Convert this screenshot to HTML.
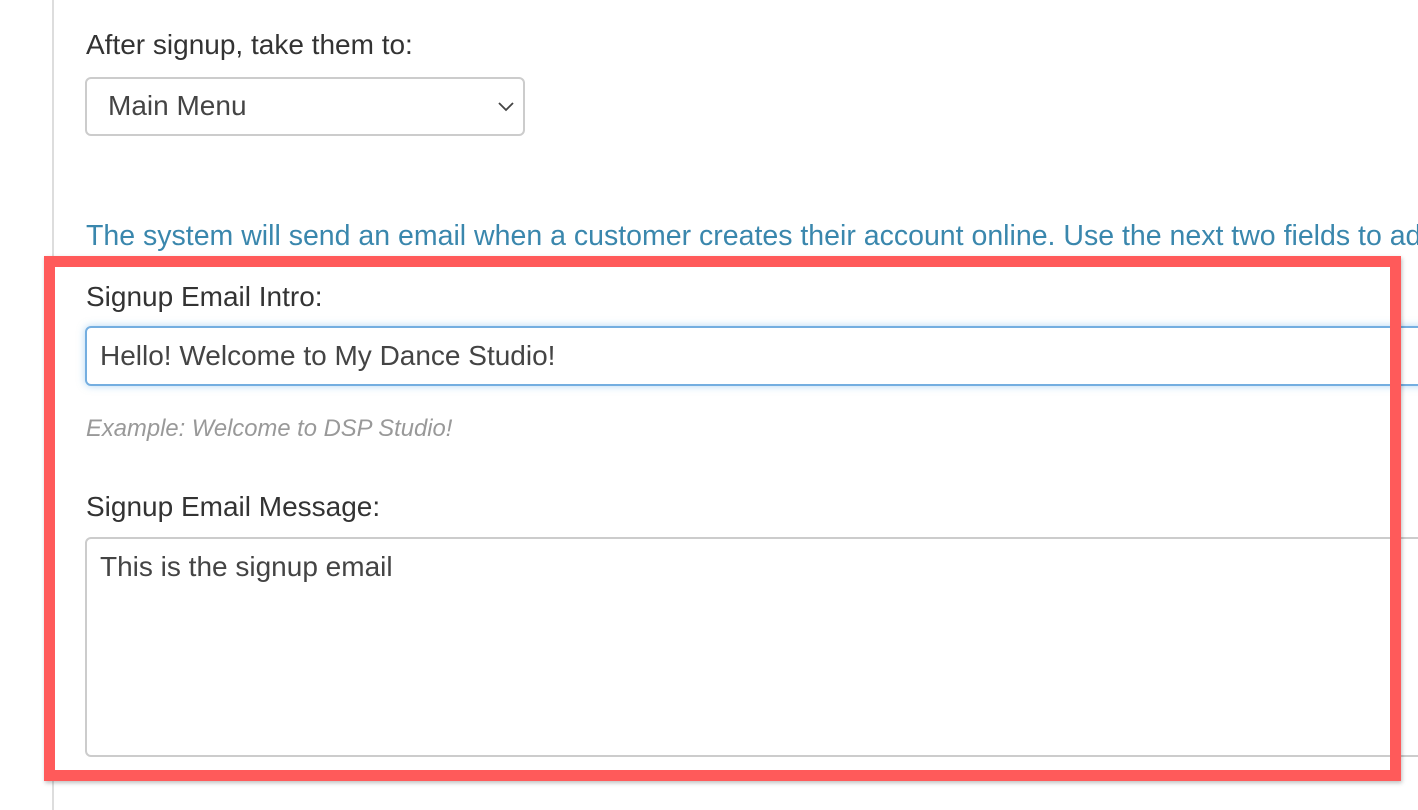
<!DOCTYPE html>
<html><head><style>
body{margin:0;width:1418px;height:810px;overflow:hidden;background:#fff;font-family:"Liberation Sans",Arial,sans-serif;position:relative}
.vl{position:absolute;left:52px;top:0;width:2px;height:810px;background:#ddd}
.t{position:absolute;white-space:nowrap}
.lbl{font-size:28px;color:#333}
.box{position:absolute;background:#fff;border:2px solid #ccc;border-radius:6px;box-sizing:border-box}
</style></head><body>
<div class="vl"></div>
<div class="t lbl" style="left:86px;top:29px">After signup, take them to:</div>
<div class="box" style="left:85px;top:77px;width:440px;height:59px"></div>
<div class="t" style="left:108px;top:90px;font-size:28px;color:#444">Main Menu</div>
<svg style="position:absolute;left:497px;top:99px" width="18" height="14"><path d="M2 4 L9 11 L16 4" stroke="#444" stroke-width="1.8" fill="none"/></svg>
<div class="t" style="left:86px;top:220px;font-size:28.5px;color:#3a87ad">The system will send an email when a customer creates their account online. Use the next two fields to add</div>
<div class="t lbl" style="left:86px;top:281px">Signup Email Intro:</div>
<div class="box" style="left:85px;top:326px;width:1400px;height:60px;border-color:#74aee0;box-shadow:0 0 8px rgba(102,175,233,.5)"></div>
<div class="t" style="left:100px;top:340px;font-size:28px;color:#444">Hello! Welcome to My Dance Studio!</div>
<div class="t" style="left:86px;top:415px;font-size:23.8px;color:#999;font-style:italic">Example: Welcome to DSP Studio!</div>
<div class="t lbl" style="left:86px;top:491px">Signup Email Message:</div>
<div class="box" style="left:85px;top:537px;width:1400px;height:220px"></div>
<div class="t" style="left:100px;top:551px;font-size:28px;color:#444">This is the signup email</div>
<div style="position:absolute;left:44px;top:256px;width:1357px;height:525px;border:11px solid #ff5a5a;box-sizing:border-box;box-shadow:1px 2px 4px rgba(0,0,0,.25)"></div>
</body></html>
